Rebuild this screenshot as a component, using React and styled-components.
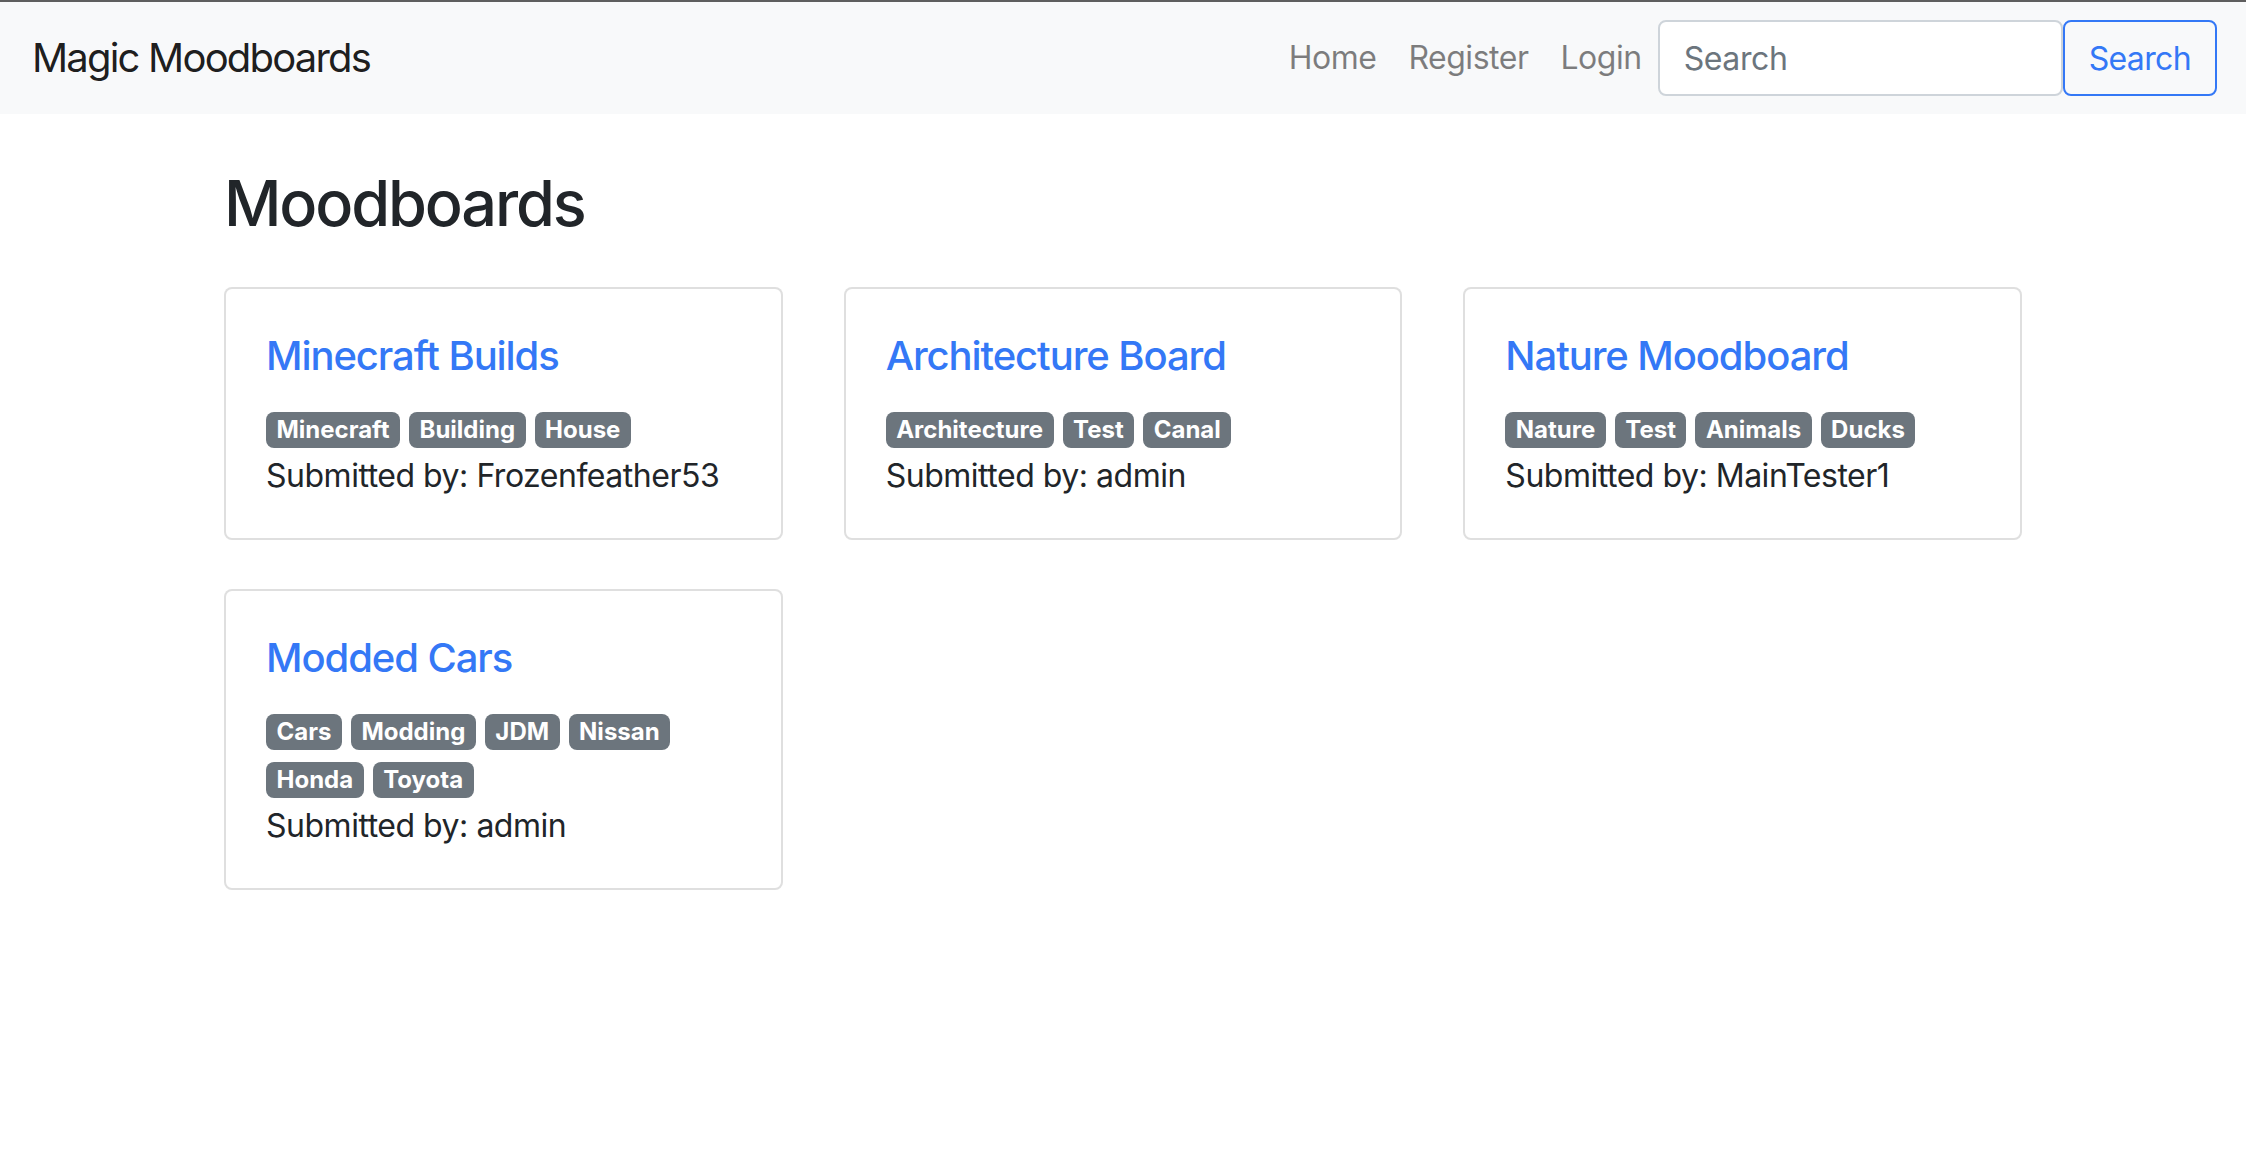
import React, { useState } from 'react';
import styled, { createGlobalStyle } from 'styled-components';

const GlobalStyle = createGlobalStyle`
  body {
    margin: 0;
    background: #fff;
    color: #212529;
    font-family: Inter, "Noto Sans", "Liberation Sans", sans-serif;
  }
  * {
    box-sizing: border-box;
  }
`;

const Navbar = styled.nav`
  display: flex;
  align-items: center;
  justify-content: space-between;
  height: 114px;
  padding: 0 29px 0 32px;
  background: #f8f9fa;
  border-top: 2px solid #5e5e5e;
`;

const Brand = styled.a`
  font-size: 40px;
  line-height: 60px;
  letter-spacing: -0.045em;
  color: rgba(0, 0, 0, 0.9);
  text-decoration: none;
  white-space: nowrap;
`;

const NavRight = styled.div`
  display: flex;
  align-items: center;
`;

const NavList = styled.ul`
  display: flex;
  list-style: none;
  margin: 0;
  padding: 0;
`;

const NavItem = styled.a`
  display: block;
  padding: 0 16px;
  font-size: 32px;
  line-height: 48px;
  letter-spacing: -0.015em;
  color: rgba(0, 0, 0, 0.5);
  text-decoration: none;
`;

const SearchForm = styled.form`
  display: flex;
  align-items: center;
`;

const SearchInput = styled.input`
  width: 405px;
  height: 76px;
  padding: 12px 24px;
  font-family: inherit;
  font-size: 32px;
  letter-spacing: -0.012em;
  color: #495057;
  background: #fff;
  border: 2px solid #ced4da;
  border-radius: 8px;
  outline: none;

  &::placeholder {
    color: #6c757d;
  }
`;

const SearchButton = styled.button`
  height: 76px;
  padding: 0 24px;
  font-family: inherit;
  font-size: 32px;
  letter-spacing: -0.02em;
  color: #3478f6;
  background: transparent;
  border: 2px solid #3478f6;
  border-radius: 8px;
  cursor: pointer;
`;

const Main = styled.main`
  width: 1798px;
  margin: 0 auto;
  padding-top: 52px;
`;

const Heading = styled.h2`
  margin: 0 0 45px;
  font-size: 63px;
  font-weight: 500;
  line-height: 1.2;
  letter-spacing: -0.034em;
`;

const Grid = styled.div`
  display: grid;
  grid-template-columns: repeat(3, 1fr);
  column-gap: 61px;
  row-gap: 49px;
  align-items: start;
`;

const Card = styled.div`
  padding: 43px 40px 38px;
  border: 2px solid rgba(0, 0, 0, 0.125);
  border-radius: 8px;
  background: #fff;
`;

const CardTitle = styled.a`
  display: block;
  margin: 0 0 27px;
  font-size: 40px;
  font-weight: 500;
  line-height: 48px;
  letter-spacing: -0.027em;
  color: #3478f6;
  text-decoration: none;
`;

const Tags = styled.div`
  display: flex;
  flex-wrap: wrap;
  column-gap: 9px;
  row-gap: 12px;
  padding: 5px 0 4px;
`;

const Badge = styled.span`
  display: inline-block;
  padding: 6px 10.5px;
  font-size: 24px;
  font-weight: 700;
  line-height: 1;
  color: #fff;
  background: #6c757d;
  border-radius: 8px;
`;

const Submitted = styled.p`
  margin: 0;
  font-size: 32px;
  line-height: 48px;
  letter-spacing: -0.015em;
`;

const boards = [
  { id: 1, title: 'Minecraft Builds', tags: ['Minecraft', 'Building', 'House'], user: 'Frozenfeather53' },
  { id: 2, title: 'Architecture Board', tags: ['Architecture', 'Test', 'Canal'], user: 'admin' },
  { id: 3, title: 'Nature Moodboard', tags: ['Nature', 'Test', 'Animals', 'Ducks'], user: 'MainTester1' },
  { id: 4, title: 'Modded Cars', tags: ['Cars', 'Modding', 'JDM', 'Nissan', 'Honda', 'Toyota'], user: 'admin' },
];

export default function App() {
  const [query, setQuery] = useState('');

  return (
    <>
      <GlobalStyle />
      <Navbar>
        <Brand href="#">Magic Moodboards</Brand>
        <NavRight>
          <NavList>
            <li><NavItem href="#">Home</NavItem></li>
            <li><NavItem href="#">Register</NavItem></li>
            <li><NavItem href="#">Login</NavItem></li>
          </NavList>
          <SearchForm onSubmit={(e) => e.preventDefault()}>
            <SearchInput
              type="search"
              placeholder="Search"
              aria-label="Search"
              value={query}
              onChange={(e) => setQuery(e.target.value)}
            />
            <SearchButton type="submit">Search</SearchButton>
          </SearchForm>
        </NavRight>
      </Navbar>
      <Main>
        <Heading>Moodboards</Heading>
        <Grid>
          {boards.map((board) => (
            <Card key={board.id}>
              <CardTitle href="#">{board.title}</CardTitle>
              <Tags>
                {board.tags.map((tag) => (
                  <Badge key={tag}>{tag}</Badge>
                ))}
              </Tags>
              <Submitted>Submitted by: {board.user}</Submitted>
            </Card>
          ))}
        </Grid>
      </Main>
    </>
  );
}
